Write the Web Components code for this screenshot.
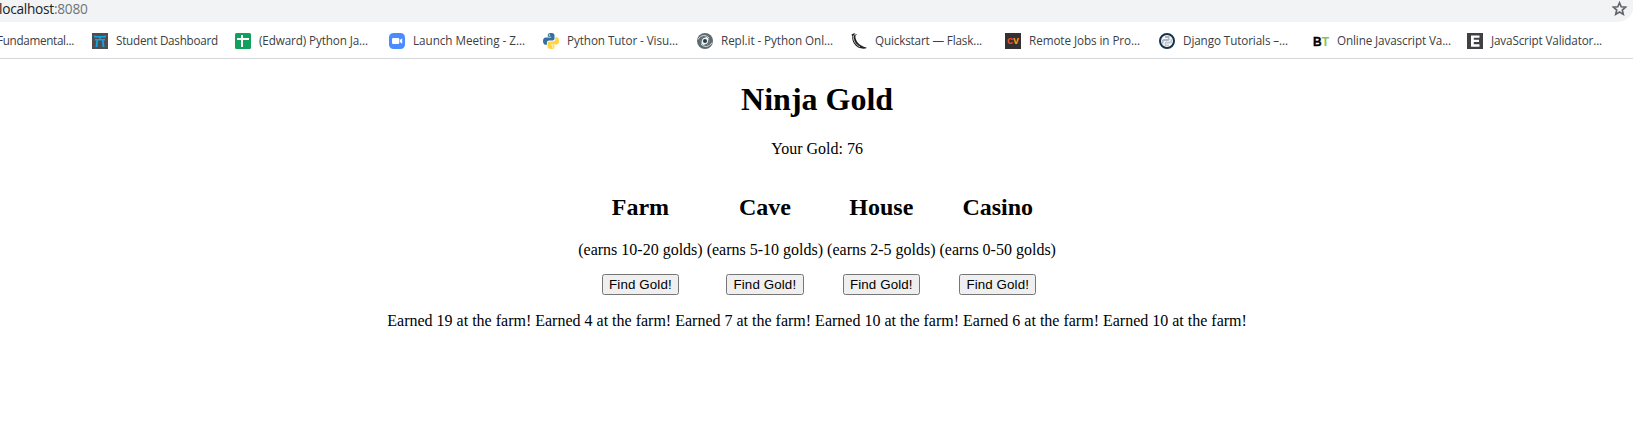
<!DOCTYPE html>
<html lang="en">
<head>
<meta charset="utf-8">
<title>Ninja Gold</title>
<style>
html,body{margin:0;height:439px;overflow:hidden;background:#fff}
body{font-family:"Liberation Serif",serif;font-size:16px;color:#000}
</style>
</head>
<body>
<ninja-app></ninja-app>
<script>
const ICONS={
gate:'<path fill="#514c4f" d="M0 0h16v16H0z"/><path fill="#14a4e0" d="M2 2.500q6 1 12 0v2H2zM3 6h10v1.500H3zM4.300 7.500H6L5.500 14H3.500zM10 7.500h1.700l.8 6.500h-2zM7.300 4.500h1.400V6H7.300z"/>',
sheet:'<rect width="16" height="16" rx="1.5" fill="#12a05c"/><path stroke="#fff" stroke-width="2" d="M2 6h12M7 2v12"/>',
zoom:'<rect width="16" height="16" rx="4.5" fill="#4a8cff"/><rect x="3" y="5" width="7.3" height="6" rx="1.2" fill="#fff"/><path fill="#fff" d="M10.9 7l2.3-1.8v5.6L10.9 9z"/>',
python:'<path fill="#36709f" d="M7.8 0C5 0 4.8 1 4.8 2v1.8h3.4v.6H3C.8 4.400 0 6 0 8s.9 3.700 2.400 3.700h1.500V9.700C3.900 8.300 5 7.400 6.200 7.400h3.600c1 0 1.700-.8 1.700-1.800V2.200C11.500.6 10 0 7.800 0z"/><circle cx="6.300" cy="2" r=".7" fill="#fff"/><path fill="#ffd341" d="M8.200 16c2.800 0 3.300-1 3.300-2v-1.800H8v-.6h5.300C15.300 11.600 16 10 16 8s-.9-3.700-2.300-3.700h-1.400v2C12.300 7.700 11.200 8.500 10 8.500H6.400c-1 0-1.800.8-1.800 1.800v3.500C4.600 15.400 6 16 8.200 16z"/><circle cx="9.800" cy="14" r=".7" fill="#fff"/>',
swirl:'<circle cx="8" cy="8" r="8" fill="#5d6b70"/><g fill="none" stroke="#dfe5e7" stroke-width=".9"><path d="M1 6.500C3.500 1.500 9.500 1.500 12 5"/><path d="M15 9.500C12.500 14.500 6.500 14.500 4 11"/></g><circle cx="8" cy="8" r="4.300" fill="#eef1f2"/><path fill="none" stroke="#5d6b70" stroke-width="1.200" d="M4.200 9.500C3.700 6.500 5.500 4 8.500 4.200M11.800 6.500c.5 3-1.300 5.500-4.300 5.300"/><circle cx="8" cy="8" r="2" fill="#2b3b41"/>',
flask:'<path fill="#222" d="M.5 1.500L3 .3l3 1.200-1.600 1.200C4.200 7.500 7.500 12.500 15.500 14.500l-.5 1c-5 .7-9.500-.8-12-5C1.500 8 1 5 1.300 3.400z"/><path fill="none" stroke="#bbb" stroke-width="1" d="M2.400 2.300c-.5 5 2 9.500 6.600 11.500M3 1.800l2-.2"/>',
cv:'<path fill="#333132" d="M0 0h16v16H0z"/><text x="2" y="11" font-family="Liberation Sans" font-weight="700" font-size="10" textLength="12" lengthAdjust="spacingAndGlyphs"><tspan fill="#f04d23">c</tspan><tspan fill="#f7941e">v</tspan></text>',
django:'<circle cx="8" cy="8" r="7" fill="#f7f8f9" stroke="#17324d" stroke-width="2"/><path fill="#a9b4be" d="M6 3h4.500v4.200L8 8H4.500v2.500H3V7l2-1h4V5H6z"/><path fill="#c0c8cf" d="M10 13H5.700V9L8 8.500h3.500V6H13v3.500l-2 1H7v1h3z"/>',
bt:'<text x="0" y="12.700" font-family="Liberation Sans" font-weight="700" font-size="13.500" textLength="16" lengthAdjust="spacingAndGlyphs" stroke-width=".4"><tspan fill="#000" stroke="#000">B</tspan><tspan fill="#8bc34a">T</tspan></text>',
e:'<path fill="#414042" d="M0 0h16v16H0z"/><path fill="#fff" d="M4 2.500h8.500v2.300H6.800v2h5.200v2.300H6.800v2.200h5.700v2.400H4z"/>',
star:'<path fill="none" stroke="#5f6368" stroke-width="1.500" d="M7 1.600l1.600 3.800 4.100.35-3.100 2.700.95 4L7 10.300l-3.550 2.150.95-4-3.100-2.700 4.100-.35z"/>'
};
const define=(name,html,setup)=>customElements.define(name,class extends HTMLElement{
 constructor(){super();const t=document.createElement('template');t.innerHTML=html;this.attachShadow({mode:'open'}).append(t.content.cloneNode(true))}
 connectedCallback(){if(setup)setup(this,this.shadowRoot)}
});
/* Spreads the tracking of a label so that it fills its nominal width. */
const fit=(el,w)=>{const n=el.textContent.length;el.style.letterSpacing=((w-el.getBoundingClientRect().width)/n)+'px'};

define('site-icon','<style>:host{display:block;flex:none;width:16px;height:16px}svg{display:block;width:100%;height:100%;overflow:visible}</style><div></div>',(h,r)=>{
 const s=h.getAttribute('name')==='star'?14:16;
 r.querySelector('div').innerHTML=`<svg viewBox="0 0 ${s} ${s}">${ICONS[h.getAttribute('name')]}</svg>`});
define('bookmark-link','<style>:host{display:flex;align-items:center;gap:8px;flex:none;width:154px;height:35px}span{font:11.700px/16px "Open Sans",sans-serif;color:#3c4043;white-space:nowrap;padding-bottom:2px}</style><div></div><span></span>',(h,r)=>{
 const i=r.querySelector('div'),s=r.querySelector('span'),icon=h.getAttribute('icon');
 if(icon)i.innerHTML=`<site-icon name="${icon}"></site-icon>`;else i.remove();
 s.textContent=h.getAttribute('label');fit(s,+h.getAttribute('w'))});
define('address-bar',`<style>:host{display:flex;justify-content:space-between;height:22px;background:#f1f3f4;border-bottom-right-radius:16px 14px}
span{font:13.700px/18px "Open Sans",sans-serif;color:#202124;margin:0 0 0 -1px;white-space:nowrap;align-self:flex-start}i{font-style:normal;color:#70757a}site-icon{width:15px;height:15px;margin:1px 6px 0 0}</style>
<span>localhost<i>:8080</i></span><site-icon name="star"></site-icon>`,(h,r)=>fit(r.querySelector('span'),88.5));
define('bookmarks-bar',`<style>:host{display:flex;height:36px;border-bottom:1px solid #d5d7da}
bookmark-link{margin-top:1px}.first{width:95px;margin-left:-3px}.second{width:143px}</style>
<bookmark-link class="first" label="Fundamental..." w="77"></bookmark-link>
<bookmark-link class="second" icon="gate" label="Student Dashboard" w="102"></bookmark-link>
<bookmark-link icon="sheet" label="(Edward) Python Ja..." w="109"></bookmark-link>
<bookmark-link icon="zoom" label="Launch Meeting - Z..." w="112"></bookmark-link>
<bookmark-link icon="python" label="Python Tutor - Visu..." w="111"></bookmark-link>
<bookmark-link icon="swirl" label="Repl.it - Python Onl..." w="112"></bookmark-link>
<bookmark-link icon="flask" label="Quickstart — Flask..." w="107"></bookmark-link>
<bookmark-link icon="cv" label="Remote Jobs in Pro..." w="111"></bookmark-link>
<bookmark-link icon="django" label="Django Tutorials –..." w="105"></bookmark-link>
<bookmark-link icon="bt" label="Online Javascript Va..." w="114"></bookmark-link>
<bookmark-link icon="e" label="JavaScript Validator..." w="111"></bookmark-link>`);
define('gold-place',`<style>:host{display:inline-block}h2{font-size:24px;line-height:27px;margin:19.900px 0}p{line-height:18px;margin:16px 0}
button{display:block;margin:-.6px auto .6px;box-sizing:border-box;width:77.500px;height:21px;padding:1px 6px;font:13.333px "Liberation Sans",sans-serif;letter-spacing:.12px;color:#000;background:#efefef;border:1px solid #767676;border-radius:2.500px;white-space:nowrap}</style>
<h2><slot name="title"></slot></h2><p><slot></slot></p><button>Find Gold!</button>`);
define('ninja-game',`<style>:host{display:block;text-align:center;padding:1px 7.400px 0 8.600px}h1{font-size:32px;line-height:37px;margin:21.440px 0}p{line-height:18px;margin:16px 0}</style>
<h1>Ninja Gold</h1><p>Your Gold: 76</p>
<div><gold-place><span slot="title">Farm</span>(earns 10-20 golds)</gold-place> <gold-place><span slot="title">Cave</span>(earns 5-10 golds)</gold-place> <gold-place><span slot="title">House</span>(earns 2-5 golds)</gold-place> <gold-place><span slot="title">Casino</span>(earns 0-50 golds)</gold-place></div>
<p>Earned 19 at the farm! Earned 4 at the farm! Earned 7 at the farm! Earned 10 at the farm! Earned 6 at the farm! Earned 10 at the farm!</p>`);
define('ninja-app','<style>:host{display:block}</style><address-bar></address-bar><bookmarks-bar></bookmarks-bar><ninja-game></ninja-game>');
</script>
</body>
</html>
